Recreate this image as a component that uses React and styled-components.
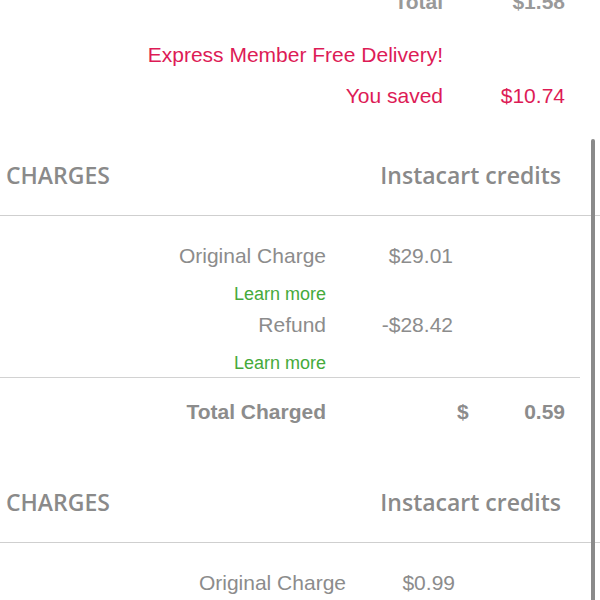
import React from "react";
import styled, { createGlobalStyle } from "styled-components";

const Global = createGlobalStyle`
  html, body { margin: 0; padding: 0; background: #fff; }
  body { font-family: "Liberation Sans", Arial, sans-serif; }
`;

const Page = styled.div`
  position: relative;
  width: 600px;
  height: 600px;
  overflow: hidden;
  background: #fff;
`;

const Summary = styled.div`
  display: flex;
  flex-direction: column;
  margin-top: -10px;
  padding-right: 35px;
`;

const SummaryRow = styled.div`
  display: grid;
  grid-template-columns: 1fr 122px;
  margin-top: ${(p) => p.$gap || 0}px;
  height: 24px;
  line-height: 24px;
  font-size: 21px;
  font-weight: ${(p) => (p.$bold ? 700 : 400)};
  color: ${(p) => p.$color};
  white-space: nowrap;
`;

const Right = styled.span`
  text-align: right;
`;

const Section = styled.section`
  margin-top: ${(p) => p.$gap}px;
  display: flex;
  flex-direction: column;
`;

const Header = styled.div`
  display: flex;
  justify-content: space-between;
  padding: 21px 39px 26px 6px;
  border-bottom: 1px solid #cfcfcf;
  font-family: "Open Sans", "Noto Sans", sans-serif;
  font-weight: 600;
  font-size: 23px;
  line-height: 28px;
  color: #8a8a8a;
  white-space: nowrap;
`;

const ChargeRow = styled.div`
  display: grid;
  grid-template-columns: ${(p) => p.$label}px ${(p) => p.$value}px;
  margin-top: ${(p) => p.$gap}px;
  height: 24px;
  line-height: 24px;
  font-size: 21px;
  color: #8c8c8c;
  white-space: nowrap;
`;

const LinkRow = styled.div`
  display: grid;
  grid-template-columns: ${(p) => p.$label}px;
  margin-top: ${(p) => p.$gap}px;
  height: 22px;
  line-height: 22px;
  font-size: 18px;
  color: #45aa3b;
  white-space: nowrap;
`;

const Link = styled.a`
  text-align: right;
  color: inherit;
  text-decoration: none;
`;

const Divider = styled.hr`
  margin: ${(p) => p.$gap}px 0 0 0;
  width: 580px;
  height: 0;
  border: none;
  border-top: 1px solid #d2d2d2;
`;

const TotalRow = styled.div`
  display: grid;
  grid-template-columns: 326px auto 1fr;
  margin-top: ${(p) => p.$gap}px;
  padding-right: 35px;
  height: 24px;
  line-height: 24px;
  font-size: 21px;
  font-weight: 700;
  color: #8c8c8c;
  white-space: nowrap;
`;

const Currency = styled.span`
  padding-left: 131px;
`;

const Scrollbar = styled.div`
  position: absolute;
  left: 591px;
  top: 139px;
  width: 4px;
  height: 480px;
  border-radius: 2px;
  background: #8a8a8a;
`;

const ChargesSection = ({ gap, rows, label, value, total }) => (
  <Section $gap={gap}>
    <Header>
      <span>CHARGES</span>
      <span>Instacart credits</span>
    </Header>
    {rows.map((r, i) => (
      <React.Fragment key={i}>
        <ChargeRow $label={label} $value={value} $gap={r.gap}>
          <Right>{r.name}</Right>
          <Right>{r.amount}</Right>
        </ChargeRow>
        {r.link && (
          <LinkRow $label={label} $gap={15}>
            <Link href="#">Learn more</Link>
          </LinkRow>
        )}
      </React.Fragment>
    ))}
    {total && (
      <>
        <Divider $gap={3} />
        <TotalRow $gap={22}>
          <Right>Total Charged</Right>
          <Currency>$</Currency>
          <Right>{total}</Right>
        </TotalRow>
      </>
    )}
  </Section>
);

export default function App() {
  return (
    <>
      <Global />
      <Page>
        <Summary>
          <SummaryRow $bold $color="#999">
            <Right>Total</Right>
            <Right>$1.58</Right>
          </SummaryRow>
          <SummaryRow $gap={29} $color="#dd1b56">
            <Right>Express Member Free Delivery!</Right>
            <span />
          </SummaryRow>
          <SummaryRow $gap={17} $color="#dd1b56">
            <Right>You saved</Right>
            <Right>$10.74</Right>
          </SummaryRow>
        </Summary>
        <ChargesSection
          gap={32}
          label={326}
          value={127}
          rows={[
            { name: "Original Charge", amount: "$29.01", gap: 28, link: true },
            { name: "Refund", amount: "-$28.42", gap: 8, link: true },
          ]}
          total="0.59"
        />
        <ChargesSection
          gap={43}
          label={346}
          value={109}
          rows={[{ name: "Original Charge", amount: "$0.99", gap: 28 }]}
        />
        <Scrollbar />
      </Page>
    </>
  );
}
